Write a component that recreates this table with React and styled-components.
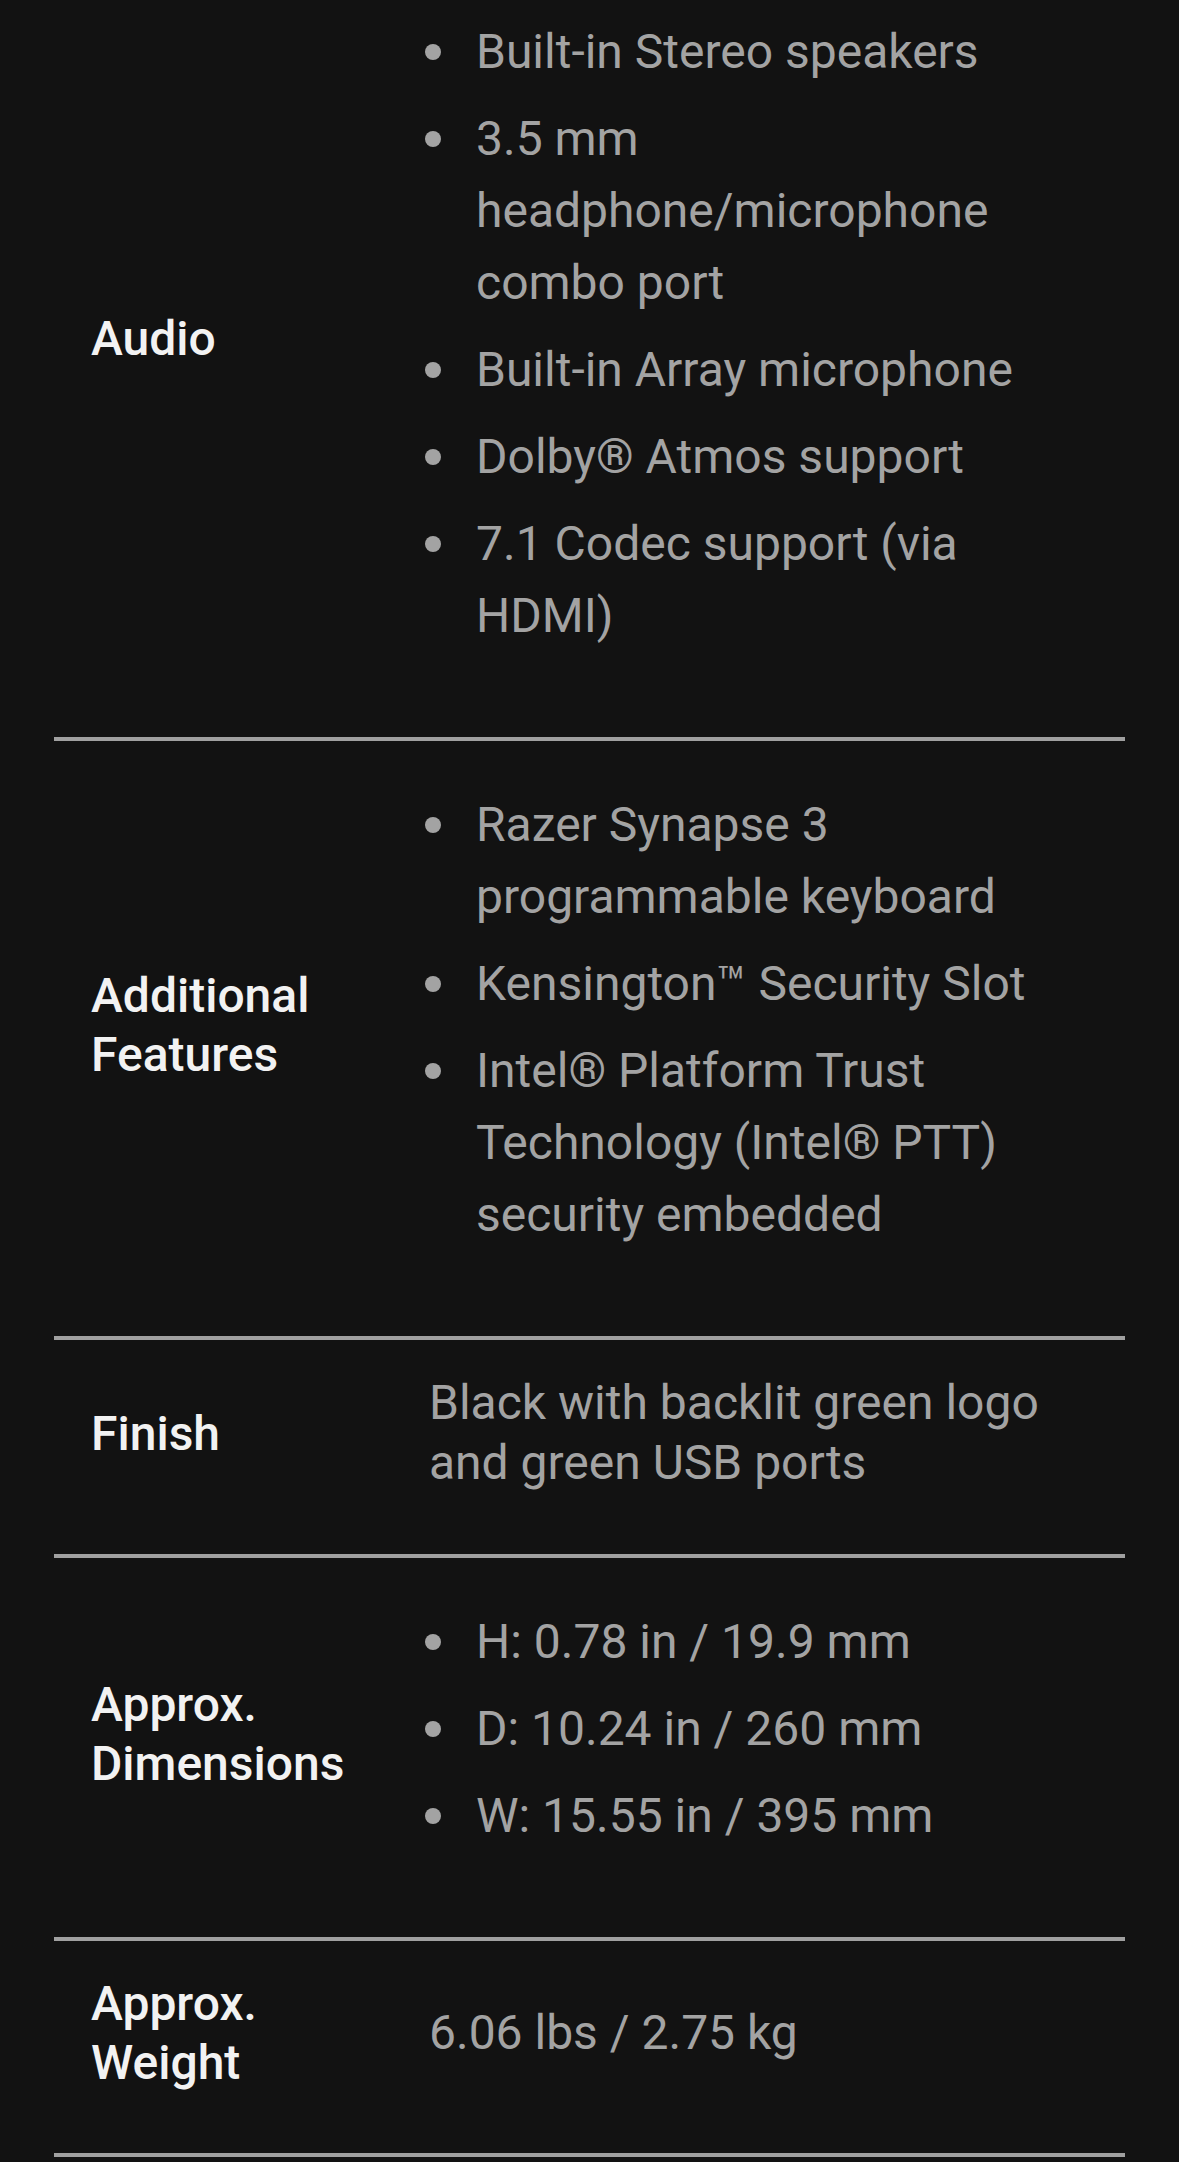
import styled, { createGlobalStyle } from 'styled-components'

const GlobalStyle = createGlobalStyle`
  html, body {
    margin: 0;
    padding: 0;
    background-color: #121212;
  }
  body {
    font-family: Roboto, 'Liberation Sans', Arial, sans-serif;
    -webkit-font-smoothing: antialiased;
  }
`;

const Page = styled.div`
  width: 100%;
  min-height: 2162px;
  background-color: #121212;
  overflow: hidden;
`;

const Table = styled.div`
  margin: -32px 54px 0 54px;
  display: flex;
  flex-direction: column;
`;

const Row = styled.div`
  display: grid;
  grid-template-columns: 338px 1fr;
  align-items: center;
  padding: 33px 37px 61px 37px;
  border-bottom: 4px solid #a0a0a0;
`;

const Label = styled.div`
  font-size: 48px;
  font-weight: 500;
  line-height: 59px;
  color: #f2f2f2;
  padding-right: 20px;
`;

const Value = styled.div`
  font-size: 48px;
  line-height: 60px;
  color: #a3a3a3;
`;

const List = styled.ul`
  list-style: none;
  margin: 15px 0 9px 0;
  padding: 0;
`;

const Item = styled.li`
  display: flex;
  font-size: 48px;
  line-height: 72px;
  color: #a3a3a3;
  margin-bottom: 15px;
  &::before{
    content: '';
    flex-shrink: 0;
    width: 16px;
    height: 16px;
    border-radius: 50%;
    background-color: #a3a3a3;
    margin: 28px 35px 0 -4px;
  }
`;

const specs = [
  {
    label: 'Audio',
    items: [
      'Built-in Stereo speakers',
      '3.5 mm headphone/microphone combo port',
      'Built-in Array microphone',
      'Dolby® Atmos support',
      '7.1 Codec support (via HDMI)',
    ],
  },
  {
    label: 'Additional Features',
    items: [
      'Razer Synapse 3 programmable keyboard',
      'Kensington™ Security Slot',
      'Intel® Platform Trust Technology (Intel® PTT) security embedded',
    ],
  },
  {
    label: 'Finish',
    text: 'Black with backlit green logo and green USB ports',
  },
  {
    label: 'Approx. Dimensions',
    items: ['H: 0.78 in / 19.9 mm', 'D: 10.24 in / 260 mm', 'W: 15.55 in / 395 mm'],
  },
  {
    label: 'Approx. Weight',
    text: '6.06 lbs / 2.75 kg',
  },
];

function App() {
  return (
    <>
      <GlobalStyle />
      <Page>
        <Table>
          {specs.map((spec) => (
            <Row key={spec.label}>
              <Label>{spec.label}</Label>
              {spec.items ? (
                <List>
                  {spec.items.map((item) => (
                    <Item key={item}>{item}</Item>
                  ))}
                </List>
              ) : (
                <Value>{spec.text}</Value>
              )}
            </Row>
          ))}
        </Table>
      </Page>
    </>
  );
}

export default App;
